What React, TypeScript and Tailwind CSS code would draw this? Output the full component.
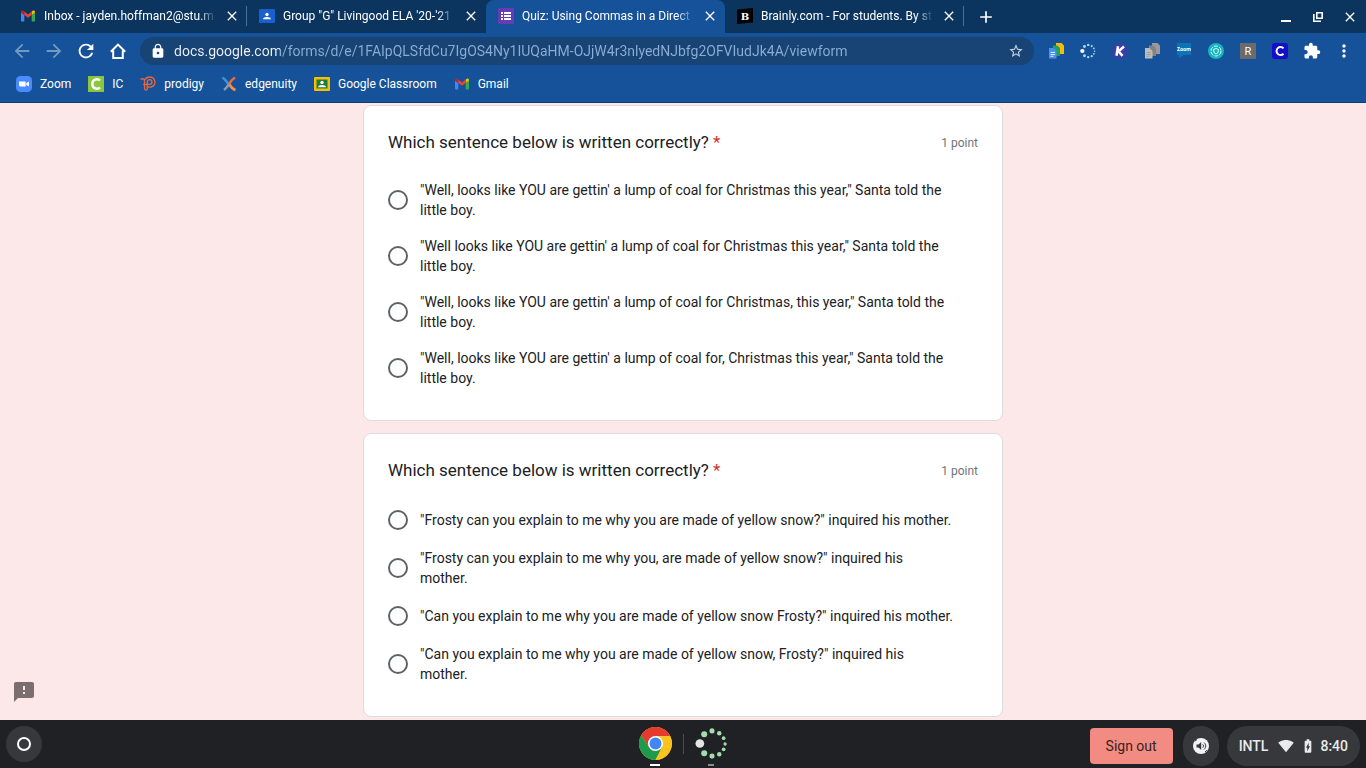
import type { ReactNode } from 'react';
import clsx from 'clsx';
import {
  MdAdd,
  MdArrowBack,
  MdArrowForward,
  MdBatteryChargingFull,
  MdClose,
  MdExtension,
  MdFeedback,
  MdLock,
  MdMoreVert,
  MdRefresh,
  MdSignalWifi4Bar,
  MdStarBorder,
} from 'react-icons/md';

function GmailIcon() {
  return (
    <svg viewBox="0 0 16 16" className="size-4 shrink-0">
      <path d="M1 4.5v8c0 .6.4 1 1 1h2.3V7z" fill="#4285f4" />
      <path d="M15 4.5v8c0 .6-.4 1-1 1h-2.3V7z" fill="#34a853" />
      <path d="M11.7 3.6V7L15 4.5V4c0-1.4-1.5-2-2.5-1z" fill="#fbbc04" />
      <path d="M1 4.5 4.3 7V3.6L3.5 3C2.5 2 1 2.6 1 4z" fill="#c5221f" />
      <path d="M4.3 3.6 8 6.4l3.7-2.8V7L8 9.8 4.3 7z" fill="#ea4335" />
    </svg>
  );
}

function ClassroomIcon({ blue = false }: { blue?: boolean }) {
  return (
    <svg viewBox="0 0 16 16" className="size-4 shrink-0">
      <rect y="1" width="16" height="14" rx="1" fill={blue ? '#1a5fd0' : '#fbbc04'} />
      <rect x="2.5" y="3.5" width="11" height="9" fill={blue ? '#1a5fd0' : '#188038'} />
      <circle cx="8" cy="6.5" r="1.7" fill="#fff" />
      <path d="M4 11.3c0-1.7 2-2.4 4-2.4s4 .7 4 2.4z" fill="#fff" />
    </svg>
  );
}

function FormsIcon() {
  return (
    <svg viewBox="0 0 16 16" className="size-4 shrink-0">
      <rect width="16" height="16" rx="1" fill="#673ab7" />
      <path d="M3 4h2v2H3zm3 0h7v2H6zM3 7h2v2H3zm3 0h7v2H6zm-3 3h2v2H3zm3 0h7v2H6z" fill="#fff" />
    </svg>
  );
}

function BrainlyIcon() {
  return (
    <svg viewBox="0 0 16 16" className="size-4 shrink-0">
      <path d="M0 1.5 16 0v14.5L0 16z" fill="#000" />
      <text x="8" y="12" textAnchor="middle" fontFamily="DejaVu Serif, serif" fontWeight="700" fontSize="10" fill="#fff">
        B
      </text>
    </svg>
  );
}

function ZoomIcon() {
  return (
    <svg viewBox="0 0 16 16" className="size-4 shrink-0">
      <rect width="16" height="16" rx="4.5" fill="#4a8cff" />
      <path d="M3 5.5h5.5c.8 0 1.2.5 1.2 1.2v3.8H4.2c-.7 0-1.2-.5-1.2-1.2zM10.3 7 13 5.5v5L10.3 9z" fill="#fff" />
    </svg>
  );
}

function CampusIcon() {
  return (
    <svg viewBox="0 0 16 16" className="size-4 shrink-0">
      <rect width="16" height="16" fill="#8cc63f" />
      <path d="M12 4.5C10.5 2.8 4.3 2.3 4.3 8s6.2 5.2 7.7 3.5" fill="none" stroke="#fff" strokeWidth="2.4" />
    </svg>
  );
}

function ProdigyIcon() {
  return (
    <svg viewBox="0 0 16 16" className="size-4 shrink-0" fill="none" stroke="#e8673c" strokeWidth="1.3">
      <path d="M.5 3.5c2-1.5 4-.5 4 1.500v7.500c0 1.700 2.800 2.500 2.800 0V11c5 .8 7.700-1.600 7.700-4.800C15 2.700 12.500 1 9.500 1 6.800 1 5.500 2.500 4.500 4" />
      <path d="M7.3 11V6c0-1.500 1-2.300 2.300-2.300S12 4.700 12 6s-1 2.400-2.400 2.400H3.200" />
    </svg>
  );
}

function EdgenuityIcon() {
  return (
    <svg viewBox="0 0 16 16" className="size-4 shrink-0" fill="none" strokeWidth="2.6">
      <path d="M1.5 1.5C4 3 6 6 7.500 8" stroke="#3c93d8" />
      <path d="M14 1.5C11.500 3 9.500 5.500 8 8" stroke="#f26a35" />
      <path d="M8 8c1.500 2.500 3.500 5 6.500 6" stroke="#f9903c" />
      <path d="M8 8c-1.500 2.500-3 4.500-5 6" stroke="#8d95b4" />
    </svg>
  );
}

function HomeIcon() {
  return (
    <svg viewBox="0 0 16 16" className="size-4" fill="none" stroke="currentColor" strokeWidth="2">
      <path d="M.8 8.800 8 1.600l7.200 7.200M3.200 7.500V15h9.600V7.500" />
    </svg>
  );
}

// ring of dots that shrink clockwise from the left
function DotRing({ className, main, dot }: { className: string; main: string; dot: string }) {
  return (
    <svg viewBox="0 0 34 34" className={className}>
      <circle cx="5" cy="17" r="4.5" fill={main} />
      <g fill={dot}>
        <circle cx="9.5" cy="7.5" r="3.1" />
        <circle cx="17.5" cy="4" r="2.6" />
        <circle cx="25" cy="6.5" r="2.3" />
        <circle cx="29.5" cy="11.5" r="1.9" />
        <circle cx="31" cy="17.5" r="1.7" />
        <circle cx="29.5" cy="23" r="1.9" />
        <circle cx="25" cy="28" r="2.3" />
        <circle cx="17.5" cy="30" r="2.6" />
        <circle cx="9.5" cy="27" r="3.1" />
      </g>
    </svg>
  );
}

function DocsCopyIcon({ gray = false }: { gray?: boolean }) {
  return (
    <svg viewBox="0 0 16 16" className="size-4">
      <path d="M8 0h5.500L16 2.500V11H8z" fill={gray ? '#9a9a9a' : '#fbbc04'} />
      <path d="M5 2.500h4.500L12 5v8H5z" fill={gray ? '#838383' : '#1ea362'} />
      <path d="M1 5h4.500L8.500 8v7.500H1z" fill={gray ? '#bdbdbd' : '#4a90f5'} />
      <path d="M2.500 9.500H7M2.500 11.500H7M2.500 13.300h3" stroke={gray ? '#999' : '#fff'} strokeWidth=".8" />
    </svg>
  );
}

function KamiIcon() {
  return (
    <svg viewBox="0 0 16 16" className="size-4">
      <circle cx="8" cy="8" r="8" fill="#3b3fa5" />
      <path d="M6 3.200 4.500 12.800M12 3.500 6.500 8.300l4 4.500" fill="none" stroke="#fff" strokeWidth="2.5" />
    </svg>
  );
}

function ZoomChatIcon() {
  return (
    <svg viewBox="0 0 16 16" className="size-4">
      <path d="M1 0h14v12H8l-5 3v-3H1z" fill="#0c73b8" />
      <text x="8" y="8" textAnchor="middle" fontFamily="Open Sans, sans-serif" fontWeight="700" fontSize="5" fill="#fff">
        Zoom
      </text>
    </svg>
  );
}

function TealIcon() {
  return (
    <svg viewBox="0 0 16 16" className="size-4" fill="none" stroke="#d9fbfb">
      <circle cx="8" cy="8" r="8" fill="#16b5c0" stroke="none" />
      <circle cx="8" cy="8" r="5" strokeDasharray="4 1.2" />
      <path d="m5.500 6.500 2.500-1 2.500 1L10 9.500l-2 1.500-2-1.500z" />
    </svg>
  );
}

function ReadIcon() {
  return (
    <svg viewBox="0 0 16 16" className="size-4">
      <rect width="16" height="16" fill="#6b6b6b" />
      <text x="8" y="12" textAnchor="middle" fontFamily="Roboto, sans-serif" fontSize="11" fill="#fff">
        R
      </text>
    </svg>
  );
}

function CleverIcon() {
  return (
    <svg viewBox="0 0 16 16" className="size-4">
      <rect width="16" height="16" rx="3" fill="#1410c9" />
      <path d="M11.500 5.300A4 4 0 1 0 11.500 10.700" fill="none" stroke="#fff" strokeWidth="2" />
    </svg>
  );
}

function ChromeIcon() {
  return (
    <svg viewBox="0 0 48 48" className="size-[33px]">
      <circle cx="24" cy="24" r="24" fill="#fbc116" />
      <path d="M24 24 14.500 29.500 3.200 12A24 24 0 0 1 44.800 12L44 13H24z" fill="#e33b2e" />
      <path d="M3.200 12A24 24 0 0 0 24 48l9.500-18.500L24 24l-9.500 5.500z" fill="#1d9a4b" />
      <path d="M24 13h21.300a24 24 0 0 1-21.300 35l9.500-18.500z" fill="#fcc31e" />
      <circle cx="24" cy="24" r="11" fill="#fff" />
      <circle cx="24" cy="24" r="8.700" fill="#4285f4" />
    </svg>
  );
}

function SpokenFeedbackIcon() {
  return (
    <svg viewBox="0 0 16 16" className="size-4">
      <circle cx="8" cy="8" r="8" fill="#f1f3f4" />
      <path d="M3.500 6.500h2L8.200 4v8L5.500 9.500h-2z" fill="#37383b" />
      <path d="M9.700 6.300c1.100 1 1.100 2.400 0 3.400M11 4.500c2.300 2 2.300 5 0 7M2 3l2-1.500M12 14l2-1.800" fill="none" stroke="#37383b" />
    </svg>
  );
}

const TABS = [
  { title: 'Inbox - jayden.hoffman2@stu.m', icon: <GmailIcon /> },
  { title: 'Group "G" Livingood ELA \'20-\'21', icon: <ClassroomIcon blue /> },
  { title: 'Quiz: Using Commas in a Direct', icon: <FormsIcon />, active: true },
  { title: 'Brainly.com - For students. By st', icon: <BrainlyIcon /> },
];

const BOOKMARKS = [
  { label: 'Zoom', icon: <ZoomIcon /> },
  { label: 'IC', icon: <CampusIcon /> },
  { label: 'prodigy', icon: <ProdigyIcon /> },
  { label: 'edgenuity', icon: <EdgenuityIcon /> },
  { label: 'Google Classroom', icon: <ClassroomIcon /> },
  { label: 'Gmail', icon: <GmailIcon /> },
];

const EXTENSIONS = [
  { label: 'Copy documents', icon: <DocsCopyIcon /> },
  { label: 'Screen recorder', icon: <DotRing className="size-4" main="#fff" dot="#a9dbe8" /> },
  { label: 'Kami', icon: <KamiIcon /> },
  { label: 'Copy pages', icon: <DocsCopyIcon gray /> },
  { label: 'Zoom', icon: <ZoomChatIcon /> },
  { label: 'Safety', icon: <TealIcon /> },
  { label: 'Reader', icon: <ReadIcon /> },
  { label: 'Clever', icon: <CleverIcon /> },
  { label: 'Extensions', icon: <MdExtension className="size-[18px]" /> },
  { label: 'Menu', icon: <MdMoreVert className="size-5" /> },
];

const QUESTIONS = [
  {
    id: 'santa',
    options: [
      '"Well, looks like YOU are gettin\' a lump of coal for Christmas this year," Santa told the\nlittle boy.',
      '"Well looks like YOU are gettin\' a lump of coal for Christmas this year," Santa told the\nlittle boy.',
      '"Well, looks like YOU are gettin\' a lump of coal for Christmas, this year," Santa told the\nlittle boy.',
      '"Well, looks like YOU are gettin\' a lump of coal for, Christmas this year," Santa told the\nlittle boy.',
    ],
  },
  {
    id: 'frosty',
    options: [
      '"Frosty can you explain to me why you are made of yellow snow?" inquired his mother.',
      '"Frosty can you explain to me why you, are made of yellow snow?" inquired his\nmother.',
      '"Can you explain to me why you are made of yellow snow Frosty?" inquired his mother.',
      '"Can you explain to me why you are made of yellow snow, Frosty?" inquired his\nmother.',
    ],
  },
];

function ToolButton({ label, children }: { label: string; children: ReactNode }) {
  return (
    <button aria-label={label} className="flex size-8 shrink-0 items-center justify-center">
      {children}
    </button>
  );
}

function TabStrip() {
  return (
    <div className="flex h-[33px] bg-[#0b355f] pl-2">
      {TABS.map(({ title, icon, active }, i) => (
        <div
          key={title}
          className={clsx(
            'flex max-w-[239px] min-w-0 flex-1 items-center gap-2 pb-px pl-3 text-xs',
            active && 'rounded-t-lg bg-[#155299]',
          )}
        >
          {icon}
          <span className="min-w-0 flex-1 overflow-hidden mask-r-from-90% whitespace-nowrap">{title}</span>
          <div className="flex items-center gap-1.5">
            <button aria-label="Close tab" className="flex size-4 items-center justify-center">
              <MdClose className="size-4" />
            </button>
            <span className={clsx('h-5 w-px', (i === 0 || i === 3) && 'bg-[#4d6f92]')} />
          </div>
        </div>
      ))}
      <button aria-label="New tab" className="flex w-11 items-center justify-center">
        <MdAdd className="size-5" />
      </button>
      <div className="ml-auto flex shrink-0 items-center">
        <ToolButton label="Minimize">
          <span className="mt-2 h-0.5 w-[10px] bg-white" />
        </ToolButton>
        <ToolButton label="Restore">
          <svg viewBox="0 0 10 10" className="size-[10px]" fill="none" stroke="currentColor" strokeWidth="1.6">
            <path d="M3.800.8h5.400v5.400H3.800zM.8 2v7.200H8" />
          </svg>
        </ToolButton>
        <ToolButton label="Close">
          <MdClose className="size-4" />
        </ToolButton>
      </div>
    </div>
  );
}

function Toolbar() {
  return (
    <div className="flex h-9 items-center px-1.5">
      <div className="flex text-[#7499c4]">
        <ToolButton label="Back">
          <MdArrowBack className="size-[22px]" />
        </ToolButton>
        <ToolButton label="Forward">
          <MdArrowForward className="size-[22px]" />
        </ToolButton>
      </div>
      <ToolButton label="Reload">
        <MdRefresh className="size-[22px]" />
      </ToolButton>
      <ToolButton label="Home">
        <HomeIcon />
      </ToolButton>
      <div className="mx-1.5 flex h-7 min-w-0 flex-1 items-center rounded-full bg-[#184375] px-2.5">
        <MdLock className="size-4 shrink-0" />
        <input
          aria-label="Address"
          defaultValue="docs.google.com/forms/d/e/1FAIpQLSfdCu7IgOS4Ny1IUQaHM-OJjW4r3nlyedNJbfg2OFVIudJk4A/viewform"
          className="ml-2 min-w-0 flex-1 bg-[linear-gradient(to_right,#f1f5fa_106px,#8caed6_106px)] bg-clip-text text-sm text-transparent outline-none"
        />
        <button aria-label="Bookmark this page" className="text-[#c9d6e6]">
          <MdStarBorder className="size-4" />
        </button>
      </div>
      {EXTENSIONS.map(({ label, icon }, i) => (
        <ToolButton key={i} label={label}>
          {icon}
        </ToolButton>
      ))}
    </div>
  );
}

function Bookmarks() {
  return (
    <nav className="flex h-[33px] items-center gap-[17px] pb-1 pl-4 text-xs">
      {BOOKMARKS.map(({ label, icon }) => (
        <a key={label} href="#" className="flex items-center gap-2">
          {icon}
          {label}
        </a>
      ))}
    </nav>
  );
}

function QuestionCard({ id, options }: { id: string; options: string[] }) {
  return (
    <section className="rounded-lg border border-[#dadce0] bg-white px-6 pt-6 pb-8">
      <div className="flex items-center justify-between">
        <h2 id={id} className="text-[17px] leading-6 text-[#202124]">
          Which sentence below is written correctly? <span className="text-[#d93025]">*</span>
        </h2>
        <span className="pt-0.5 text-xs text-[#70757a]">1 point</span>
      </div>
      <div role="radiogroup" aria-labelledby={id} className="mt-[26px] flex flex-col gap-4">
        {options.map((option) => (
          <label key={option} className="flex min-h-6 items-center gap-3 text-sm text-[#202124]">
            <input
              type="radio"
              name={id}
              className="size-5 shrink-0 appearance-none rounded-full border-2 border-[#5f6368] checked:border-[#d93025]"
            />
            <span className="leading-5 whitespace-pre-line">{option}</span>
          </label>
        ))}
      </div>
    </section>
  );
}

function Shelf() {
  return (
    <footer className="grid h-12 shrink-0 grid-cols-[1fr_auto_1fr] items-center bg-[#202124] px-1.5 text-white">
      <button aria-label="Launcher" className="flex size-9 items-center justify-center rounded-full bg-[#37383b]">
        <span className="size-[14px] rounded-full border-2 border-white" />
      </button>
      <div className="flex h-full items-center gap-[11px]">
        <button aria-label="Chrome" className="flex h-full flex-col items-center justify-end gap-1 pb-0.5">
          <ChromeIcon />
          <span className="h-0.5 w-[10px] bg-white" />
        </button>
        <span className="h-5 w-px bg-[#4a4b4e]" />
        <button aria-label="Recorder" className="flex h-full flex-col items-center justify-end gap-1 pb-0.5">
          <DotRing className="size-[33px]" main="#e4e6e4" dot="#a5dcae" />
          <span className="h-0.5 w-1.5 bg-[#8a8b8d]" />
        </button>
      </div>
      <div className="flex items-center gap-2 self-end justify-self-end pb-0.5 text-sm font-medium text-[#e8eaed]">
        <button className="h-9 rounded bg-[#f28b82] px-4 font-normal text-[#3a1f20]">Sign out</button>
        <button aria-label="Sound" className="ml-0.5 flex h-10 w-9 items-center justify-center rounded-full bg-[#37383b]">
          <SpokenFeedbackIcon />
        </button>
        <button className="flex h-10 items-center gap-2 rounded-full bg-[#37383b] px-3">
          INTL
          <MdSignalWifi4Bar className="ml-0.5 size-4" />
          <MdBatteryChargingFull className="-mr-1 -ml-0.5 size-4" />
          <span>8:40</span>
        </button>
      </div>
    </footer>
  );
}

export default function App() {
  return (
    <div className="flex h-screen flex-col overflow-hidden font-[Roboto,sans-serif]">
      <header className="shrink-0 border-b border-[#0f3d73] bg-[#155299] text-white">
        <TabStrip />
        <Toolbar />
        <Bookmarks />
      </header>
      <main className="relative min-h-0 flex-1 overflow-hidden bg-[#fce8e8]">
        <div className="mx-auto flex max-w-[640px] flex-col gap-3 pt-0.5">
          {QUESTIONS.map((question) => (
            <QuestionCard key={question.id} {...question} />
          ))}
        </div>
        <button aria-label="Report a problem" className="absolute bottom-4 left-3 text-[#7a6e6f]">
          <MdFeedback className="size-6" />
        </button>
      </main>
      <Shelf />
    </div>
  );
}
